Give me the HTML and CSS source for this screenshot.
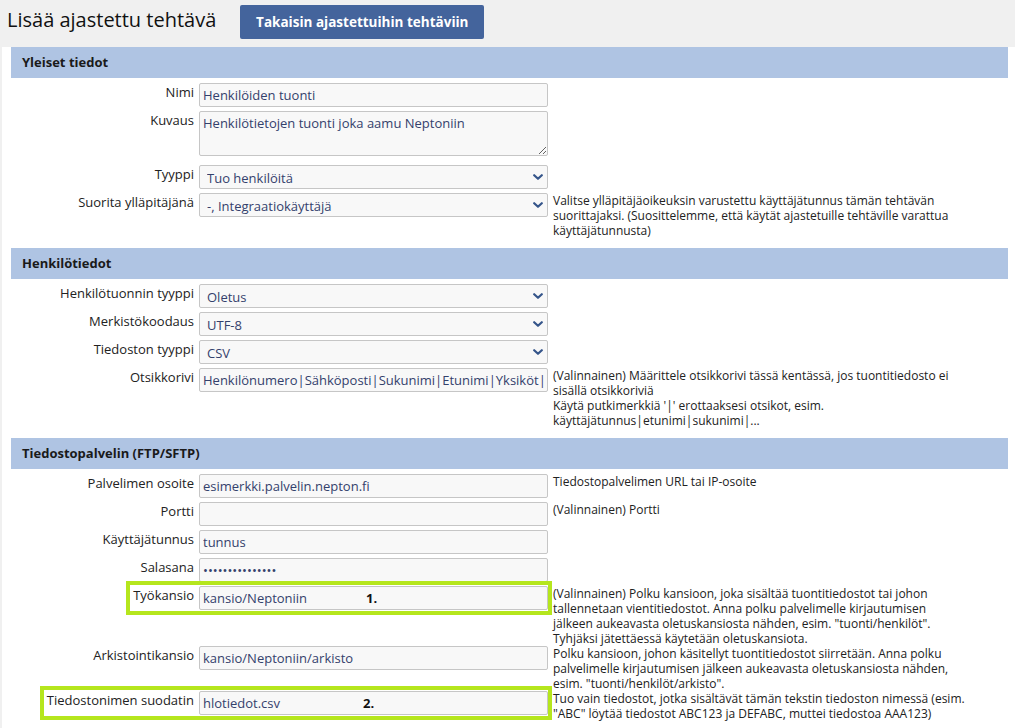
FILE: index.html
```html
<!DOCTYPE html>
<html lang="fi">
<head>
<meta charset="utf-8">
<title>Lisää ajastettu tehtävä</title>
<link rel="stylesheet" href="styles.css">
</head>
<body>
<div class="topbar">
  <h1 class="title">Lisää ajastettu tehtävä</h1>
  <button class="back-btn" type="button">Takaisin ajastettuihin tehtäviin</button>
</div>
<div class="panel">
  <section class="section">
    <div class="sec-head">Yleiset tiedot</div>
    <div class="row">
      <div class="lhs"><label class="lbl">Nimi</label><input class="field" type="text" value="Henkilöiden tuonti"></div>
    </div>
    <div class="row">
      <div class="lhs lhs-tall"><label class="lbl">Kuvaus</label><textarea class="field area">Henkilötietojen tuonti joka aamu Neptoniin</textarea></div>
    </div>
    <div class="row">
      <div class="lhs"><label class="lbl">Tyyppi</label>
        <div class="sel"><select class="field select"><option>Tuo henkilöitä</option></select><svg class="chev" viewBox="0 0 10 6"><path d="M1.2 1.2 L5 4.8 L8.8 1.2" /></svg></div>
      </div>
    </div>
    <div class="row">
      <div class="lhs"><label class="lbl">Suorita ylläpitäjänä</label>
        <div class="sel"><select class="field select"><option>-, Integraatiokäyttäjä</option></select><svg class="chev" viewBox="0 0 10 6"><path d="M1.2 1.2 L5 4.8 L8.8 1.2" /></svg></div>
      </div>
      <div class="help">Valitse ylläpitäjäoikeuksin varustettu käyttäjätunnus tämän tehtävän suorittajaksi. (Suosittelemme, että käytät ajastetuille tehtäville varattua käyttäjätunnusta)</div>
    </div>
  </section>

  <section class="section">
    <div class="sec-head">Henkilötiedot</div>
    <div class="row">
      <div class="lhs"><label class="lbl">Henkilötuonnin tyyppi</label>
        <div class="sel"><select class="field select"><option>Oletus</option></select><svg class="chev" viewBox="0 0 10 6"><path d="M1.2 1.2 L5 4.8 L8.8 1.2" /></svg></div>
      </div>
    </div>
    <div class="row">
      <div class="lhs"><label class="lbl">Merkistökoodaus</label>
        <div class="sel"><select class="field select"><option>UTF-8</option></select><svg class="chev" viewBox="0 0 10 6"><path d="M1.2 1.2 L5 4.8 L8.8 1.2" /></svg></div>
      </div>
    </div>
    <div class="row">
      <div class="lhs"><label class="lbl">Tiedoston tyyppi</label>
        <div class="sel"><select class="field select"><option>CSV</option></select><svg class="chev" viewBox="0 0 10 6"><path d="M1.2 1.2 L5 4.8 L8.8 1.2" /></svg></div>
      </div>
    </div>
    <div class="row">
      <div class="lhs"><label class="lbl">Otsikkorivi</label><input class="field" type="text" value="Henkilönumero|Sähköposti|Sukunimi|Etunimi|Yksiköt|Esimies"></div>
      <div class="help">(Valinnainen) Määrittele otsikkorivi tässä kentässä, jos tuontitiedosto ei sisällä otsikkoriviä<br>Käytä putkimerkkiä '|' erottaaksesi otsikot, esim. käyttäjätunnus|etunimi|sukunimi|...</div>
    </div>
  </section>

  <section class="section">
    <div class="sec-head">Tiedostopalvelin (FTP/SFTP)</div>
    <div class="row">
      <div class="lhs"><label class="lbl">Palvelimen osoite</label><input class="field" type="text" value="esimerkki.palvelin.nepton.fi"></div>
      <div class="help">Tiedostopalvelimen URL tai IP-osoite</div>
    </div>
    <div class="row">
      <div class="lhs"><label class="lbl">Portti</label><input class="field" type="text" value=""></div>
      <div class="help">(Valinnainen) Portti</div>
    </div>
    <div class="row">
      <div class="lhs"><label class="lbl">Käyttäjätunnus</label><input class="field" type="text" value="tunnus"></div>
    </div>
    <div class="row">
      <div class="lhs"><label class="lbl">Salasana</label><input class="field" type="password" value="salasana1234567"></div>
    </div>
    <div class="row">
      <div class="lhs">
        <div class="pair"><label class="lbl">Työkansio</label><div class="fwrap"><input class="field" type="text" value="kansio/Neptoniin"><span class="num num1">1.</span></div></div>
      </div>
      <div class="help">(Valinnainen) Polku kansioon, joka sisältää tuontitiedostot tai johon tallennetaan vientitiedostot. Anna polku palvelimelle kirjautumisen jälkeen aukeavasta oletuskansiosta nähden, esim. "tuonti/henkilöt".<br>Tyhjäksi jätettäessä käytetään oletuskansiota.</div>
    </div>
    <div class="row">
      <div class="lhs"><label class="lbl">Arkistointikansio</label><input class="field" type="text" value="kansio/Neptoniin/arkisto"></div>
      <div class="help">Polku kansioon, johon käsitellyt tuontitiedostot siirretään. Anna polku palvelimelle kirjautumisen jälkeen aukeavasta oletuskansiosta nähden, esim. "tuonti/henkilöt/arkisto".</div>
    </div>
    <div class="row">
      <div class="lhs">
        <div class="pair"><label class="lbl">Tiedostonimen suodatin</label><div class="fwrap"><input class="field" type="text" value="hlotiedot.csv"><span class="num num2">2.</span></div></div>
      </div>
      <div class="help help-wide">Tuo vain tiedostot, jotka sisältävät tämän tekstin tiedoston nimessä (esim.<br>"ABC" löytää tiedostot ABC123 ja DEFABC, muttei tiedostoa AAA123)</div>
    </div>
  </section>
</div>
</body>
</html>
```

FILE: styles.css
```css
* {
  box-sizing: border-box;
}

body {
  margin: 0;
  background: #f0f0f0;
  font-family: "Open Sans", "Liberation Sans", sans-serif;
  color: #222;
}

.topbar {
  display: flex;
  align-items: flex-start;
  height: 47px;
  padding: 5px 0 0 7px;
}

.title {
  margin: 1px 24px 0 0;
  font-size: 20px;
  font-weight: normal;
  line-height: 27px;
  color: #111;
  white-space: nowrap;
}

.back-btn {
  height: 34px;
  width: 244px;
  padding: 0;
  background: #44649c;
  color: #fff;
  border: 0;
  border-radius: 2px;
  font-family: "Open Sans", "Liberation Sans", sans-serif;
  font-weight: bold;
  font-size: 13.5px;
  white-space: nowrap;
}

.panel {
  margin-left: 2px;
  background: #fff;
  padding: 0 7px 0 9px;
  min-height: 681px;
}

.section {
  padding-bottom: 10px;
}

.sec-head {
  height: 31px;
  line-height: 31px;
  padding-left: 11px;
  margin-bottom: 5px;
  background: #afc4e3;
  font-weight: bold;
  font-size: 13px;
  color: #1a1a1a;
}

.row {
  display: flex;
  align-items: flex-start;
  gap: 5px;
}

.lhs {
  flex: none;
  width: 537px;
  display: flex;
  justify-content: flex-end;
  align-items: flex-start;
  gap: 5px;
  padding-bottom: 4px;
}

.lhs-tall {
  padding-bottom: 9px;
}

.lbl {
  font-size: 13px;
  line-height: 18px;
  text-align: right;
  color: #222;
  white-space: nowrap;
}

.field {
  display: block;
  width: 349px;
  height: 24px;
  margin: 0;
  padding: 0 3px;
  border: 1px solid #c6c6c6;
  border-radius: 2px;
  background: #f8f8f8;
  font-family: "Open Sans", "Liberation Sans", sans-serif;
  font-size: 13px;
  color: #34416c;
  outline: none;
}

.area {
  height: 45px;
  padding: 2px 3px;
  resize: vertical;
  line-height: 18px;
}

.sel {
  position: relative;
  width: 349px;
  height: 24px;
}

.select {
  width: 100%;
  height: 100%;
  padding: 2px 20px 0 7px;
  -webkit-appearance: none;
  appearance: none;
}

.chev {
  position: absolute;
  right: 5px;
  top: 9px;
  width: 10px;
  height: 6px;
  pointer-events: none;
}

.chev path {
  fill: none;
  stroke: #35558a;
  stroke-width: 2.2;
  stroke-linecap: round;
  stroke-linejoin: round;
}

.help {
  width: 410px;
  font-size: 12px;
  line-height: 15px;
  color: #222;
}

.help-wide {
  width: 440px;
}

.pair {
  position: relative;
  display: flex;
  align-items: flex-start;
  gap: 5px;
}

.pair::after {
  content: "";
  position: absolute;
  top: -5px;
  bottom: -5px;
  left: -7px;
  right: -4px;
  border: 4px solid #b5e61d;
  pointer-events: none;
}

.fwrap {
  position: relative;
}

.num {
  position: absolute;
  top: 3px;
  font-size: 13px;
  font-weight: bold;
  line-height: 18px;
  color: #111;
}

.num1 {
  left: 167px;
}

.num2 {
  left: 164px;
}
```
